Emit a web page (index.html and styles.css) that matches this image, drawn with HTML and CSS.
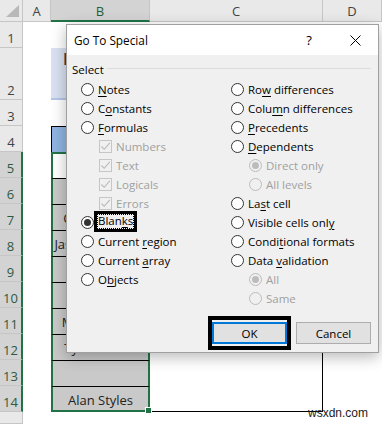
FILE: index.html
```html
<!DOCTYPE html>
<html>
<head>
<meta charset="utf-8">
<title>Go To Special</title>
<link rel="stylesheet" href="styles.css">
</head>
<body>
<div class="sheet">
  <div class="corner"><span class="tri"></span></div>
  <div class="ch">A</div>
  <div class="ch sel">B</div>
  <div class="ch">C</div>
  <div class="ch">D</div>

  <div class="rh">1</div><div class="c"></div><div class="c"></div><div class="c"></div><div class="c"></div>
  <div class="rh">2</div><div class="c"></div><div class="c b2"><span class="title-frag">Dataset</span></div><div class="c"></div><div class="c"></div>
  <div class="rh">3</div><div class="c"></div><div class="c"></div><div class="c"></div><div class="c"></div>
  <div class="rh">4</div><div class="c"></div><div class="c b4"></div><div class="c tc"></div><div class="c"></div>
  <div class="rh hs">5</div><div class="c"></div><div class="c bs first"></div><div class="c tc"></div><div class="c"></div>
  <div class="rh hs">6</div><div class="c"></div><div class="c bs g"></div><div class="c tc"></div><div class="c"></div>
  <div class="rh hs">7</div><div class="c"></div><div class="c bs g">Chris Martin</div><div class="c tc"></div><div class="c"></div>
  <div class="rh hs">8</div><div class="c"></div><div class="c bs g">Jason Stratham</div><div class="c tc"></div><div class="c"></div>
  <div class="rh hs">9</div><div class="c"></div><div class="c bs g"></div><div class="c tc"></div><div class="c"></div>
  <div class="rh hs">10</div><div class="c"></div><div class="c bs g"></div><div class="c tc"></div><div class="c"></div>
  <div class="rh hs">11</div><div class="c"></div><div class="c bs g">Mark Ruffalo</div><div class="c tc"></div><div class="c"></div>
  <div class="rh hs">12</div><div class="c"></div><div class="c bs g">Tyler Brown</div><div class="c tc"></div><div class="c"></div>
  <div class="rh hs">13</div><div class="c"></div><div class="c bs g"></div><div class="c tc"></div><div class="c"></div>
  <div class="rh hs">14</div><div class="c"></div><div class="c bs g last">Alan Styles<span class="handle"></span></div><div class="c tc tl"></div><div class="c"></div>
  <div class="rh"></div><div class="c"></div><div class="c"></div><div class="c"></div><div class="c"></div>
</div>

<div class="dialog">
  <div class="titlebar">
    <span class="title">Go To Special</span>
    <span class="help">?</span>
    <span class="close"><svg width="11" height="11" viewBox="0 0 11 11"><path d="M0.5 0.5L10.5 10.5M10.5 0.5L0.5 10.5" stroke="#000" stroke-width="1" fill="none"/></svg></span>
  </div>
  <div class="dbody">
    <div class="group"><span class="legend">Select</span><span class="rule"></span></div>
    <div class="options">
      <div class="col">
        <div class="opt"><span class="radio"></span><span class="lbl"><u>N</u>otes</span></div>
        <div class="opt"><span class="radio"></span><span class="lbl">C<u>o</u>nstants</span></div>
        <div class="opt"><span class="radio"></span><span class="lbl"><u>F</u>ormulas</span></div>
        <div class="opt sub dis"><span class="check"><svg width="11" height="11" viewBox="0 0 11 11"><path d="M1.5 5.5L4.2 8.3L9.8 1.8" stroke="#b9b9b9" stroke-width="1.1" fill="none"/></svg></span><span class="lbl">Numbers</span></div>
        <div class="opt sub dis"><span class="check"><svg width="11" height="11" viewBox="0 0 11 11"><path d="M1.5 5.5L4.2 8.3L9.8 1.8" stroke="#b9b9b9" stroke-width="1.1" fill="none"/></svg></span><span class="lbl">Text</span></div>
        <div class="opt sub dis"><span class="check"><svg width="11" height="11" viewBox="0 0 11 11"><path d="M1.5 5.5L4.2 8.3L9.8 1.8" stroke="#b9b9b9" stroke-width="1.1" fill="none"/></svg></span><span class="lbl">Logicals</span></div>
        <div class="opt sub dis"><span class="check"><svg width="11" height="11" viewBox="0 0 11 11"><path d="M1.5 5.5L4.2 8.3L9.8 1.8" stroke="#b9b9b9" stroke-width="1.1" fill="none"/></svg></span><span class="lbl">Errors</span></div>
        <div class="opt"><span class="radio on"></span><span class="lbl focus">Blan<u>k</u>s</span></div>
        <div class="opt"><span class="radio"></span><span class="lbl">Current <u>r</u>egion</span></div>
        <div class="opt"><span class="radio"></span><span class="lbl">Current <u>a</u>rray</span></div>
        <div class="opt"><span class="radio"></span><span class="lbl">O<u>b</u>jects</span></div>
      </div>
      <div class="col">
        <div class="opt"><span class="radio"></span><span class="lbl">Ro<u>w</u> differences</span></div>
        <div class="opt"><span class="radio"></span><span class="lbl">Colu<u>m</u>n differences</span></div>
        <div class="opt"><span class="radio"></span><span class="lbl"><u>P</u>recedents</span></div>
        <div class="opt"><span class="radio"></span><span class="lbl"><u>D</u>ependents</span></div>
        <div class="opt sub dis"><span class="radio on"></span><span class="lbl">Direct only</span></div>
        <div class="opt sub dis"><span class="radio"></span><span class="lbl">All levels</span></div>
        <div class="opt"><span class="radio"></span><span class="lbl">La<u>s</u>t cell</span></div>
        <div class="opt"><span class="radio"></span><span class="lbl">Visible cells onl<u>y</u></span></div>
        <div class="opt"><span class="radio"></span><span class="lbl">Condi<u>t</u>ional formats</span></div>
        <div class="opt"><span class="radio"></span><span class="lbl">Data <u>v</u>alidation</span></div>
        <div class="opt sub dis"><span class="radio on"></span><span class="lbl">All</span></div>
        <div class="opt sub dis"><span class="radio"></span><span class="lbl">Same</span></div>
      </div>
    </div>
    <div class="buttons">
      <span class="mark"><button class="btn default">OK</button></span>
      <button class="btn">Cancel</button>
    </div>
  </div>
</div>

<div class="watermark">wsxdn.com</div>
</body>
</html>
```

FILE: styles.css
```css
* { box-sizing: border-box; }
html, body { margin: 0; padding: 0; }
body {
  width: 382px;
  height: 424px;
  overflow: hidden;
  position: relative;
  background: #fff;
  font-family: "Open Sans", "Noto Sans", sans-serif;
}

/* ---------- sheet ---------- */
.sheet {
  display: grid;
  grid-template-columns: 23px 28px 99px 173px 1fr;
  grid-template-rows: 22px 26px 52px 26px 26px repeat(10, 26px) 1fr;
  height: 424px;
}
.corner {
  background: #e9e9e9;
  border-right: 1px solid #c6c6c6;
  border-bottom: 1px solid #c6c6c6;
  display: flex;
  align-items: flex-end;
  justify-content: flex-end;
  padding: 0 3px 4px 0;
}
.tri {
  width: 0;
  height: 0;
  border-left: 13px solid transparent;
  border-bottom: 12px solid #b8b8b8;
}
.ch {
  background: #e9e9e9;
  border-right: 1px solid #c6c6c6;
  border-bottom: 1px solid #c6c6c6;
  display: flex;
  align-items: center;
  justify-content: center;
  font-size: 13px;
  color: #444;
  padding-top: 1px;
}
.ch.sel {
  background: #d3d3d3;
  color: #1f5f3d;
  border-bottom: 2px solid #217346;
}
.rh {
  background: #e9e9e9;
  border-right: 1px solid #c6c6c6;
  border-bottom: 1px solid #c6c6c6;
  display: flex;
  align-items: flex-end;
  justify-content: center;
  font-size: 13px;
  line-height: 18px;
  color: #444;
  padding-bottom: 0;
}
.rh.hs {
  background: #d3d3d3;
  color: #2d5a41;
  border-right: 2px solid #217346;
}
.c {
  background: #fff;
  font-size: 13px;
  color: #222;
}
.b2 {
  background: #d9e1f2;
  border-bottom: 2px solid #b4c6e7;
  padding-left: 12px;
}
.title-frag {
  font-weight: 700;
  font-size: 16px;
  line-height: 18px;
  color: #404040;
  display: block;
  margin-top: 2px;
}
.b4 {
  background: #8fb4e0;
  border-top: 1px solid #000;
  border-left: 1px solid #000;
}
.tc { border-right: 1px solid #000; }
.tl { border-bottom: 1px solid #000; }
.bs {
  border-left: 2px solid #217346;
  border-right: 2px solid #217346;
  display: flex;
  align-items: center;
  justify-content: center;
  padding-top: 1px;
  white-space: nowrap;
  overflow: hidden;
}
.bs.first { border-top: 2px solid #217346; }
.bs.g {
  background: #c9c9c9;
  border-top: 1px solid #000;
}
.bs.last {
  border-bottom: 2px solid #217346;
  position: relative;
  overflow: visible;
  padding-top: 2px;
}
.handle {
  position: absolute;
  right: -4px;
  bottom: -4px;
  width: 7px;
  height: 7px;
  background: #217346;
  border: 1px solid #fff;
}

/* ---------- dialog ---------- */
.dialog {
  position: absolute;
  left: 66px;
  top: 24px;
  width: 313px;
  height: 329px;
  border: 1px solid #a0a0a0;
  background: #f0f0f0;
  box-shadow: 0 4px 14px rgba(0, 0, 0, 0.28);
  display: flex;
  flex-direction: column;
  font-size: 11.5px;
  color: #000;
}
.titlebar {
  height: 30px;
  background: #fff;
  display: flex;
  align-items: center;
  padding: 0 0 0 7px;
}
.title {
  flex: 1;
  font-size: 11.8px;
}
.help {
  font-size: 13px;
  width: 20px;
  text-align: center;
  margin-right: 31px;
}
.close {
  width: 11px;
  height: 11px;
  display: flex;
  margin-right: 17px;
}
.dbody {
  flex: 1;
  display: flex;
  flex-direction: column;
  padding: 0 7px 2px 5px;
}
.group {
  display: flex;
  align-items: center;
  margin-top: 7px;
  height: 14px;
}
.legend { padding-right: 3px; }
.rule {
  flex: 1;
  height: 1px;
  background: #dcdcdc;
  margin-top: -1px;
}
.options {
  display: flex;
  margin-top: 4px;
  padding-left: 9px;
}
.col {
  display: flex;
  flex-direction: column;
}
.col:first-child { width: 150px; }
.opt {
  height: 19px;
  display: flex;
  align-items: center;
  gap: 4px;
  white-space: nowrap;
}
.opt.sub { padding-left: 18px; }
.opt.dis .lbl { color: #a0a0a0; }
.radio {
  width: 13px;
  height: 13px;
  border-radius: 50%;
  border: 1px solid #333;
  background: #fff;
  flex: none;
  display: flex;
  align-items: center;
  justify-content: center;
}
.radio.on::after {
  content: "";
  width: 7px;
  height: 7px;
  border-radius: 50%;
  background: #333;
}
.opt.dis .radio {
  border-color: #bcbcbc;
  background: #f0f0f0;
}
.opt.dis .radio.on::after { background: #bcbcbc; }
.check {
  width: 13px;
  height: 13px;
  border: 1px solid #c6c6c6;
  background: #f0f0f0;
  flex: none;
  display: flex;
}
.lbl u { text-decoration-thickness: 1px; text-underline-offset: 2px; }
.lbl.focus {
  border: 1px dotted #000;
  outline: 3px solid #000;
  line-height: 12px;
  padding: 0 0 1px 0;
  margin-left: -1px;
  margin-top: -2px;
}
.buttons {
  margin-top: auto;
  display: flex;
  justify-content: flex-end;
  align-items: center;
  gap: 5px;
}
.mark {
  border: 4px solid #000;
  padding: 2px 0;
  display: flex;
}
.btn {
  width: 75px;
  height: 22px;
  font: inherit;
  font-size: 11.5px;
  color: #000;
  background: #e1e1e1;
  border: 1px solid #adadad;
  padding: 0;
  margin: 0;
}
.btn.default { border: 2px solid #0078d7; }

.watermark {
  position: absolute;
  left: 308px;
  top: 406px;
  font-family: "Liberation Sans", Arial, sans-serif;
  font-size: 12px;
  color: #222;
}
```
